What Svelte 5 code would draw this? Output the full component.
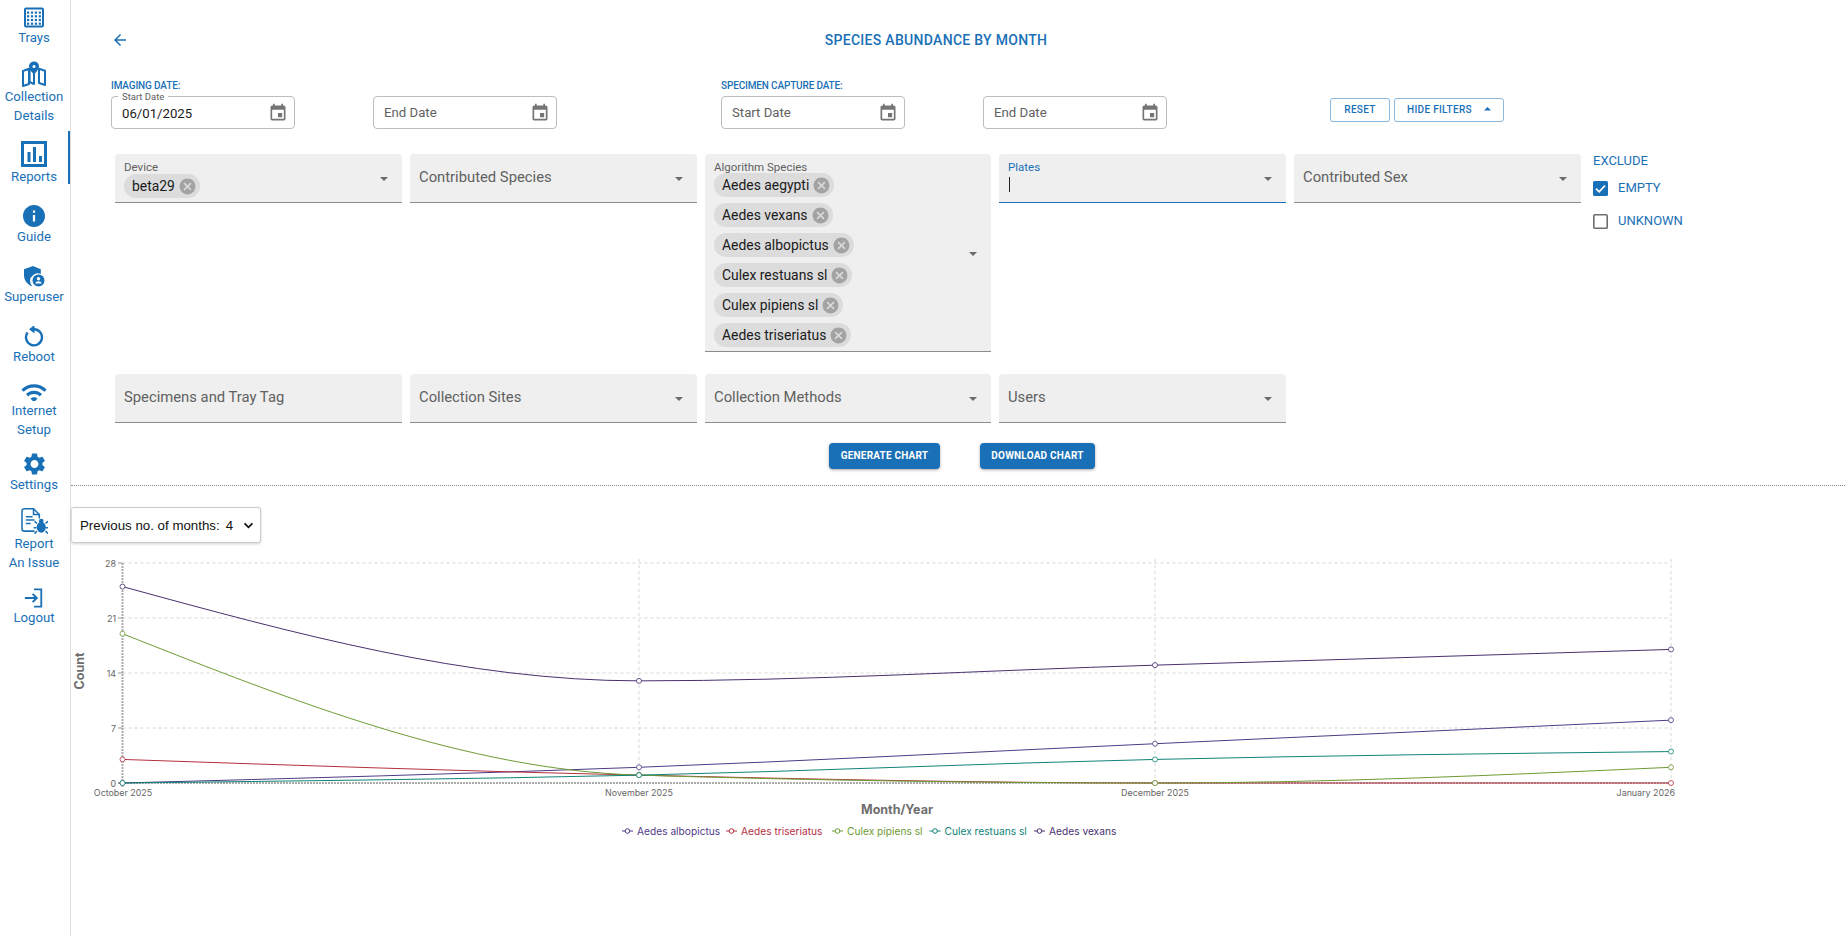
<script>
  const side = [
    { k: 'trays', label: ['Trays'], mt: 7, w: 24, h: 21, vb: '0 0 24 21' },
    { k: 'map', label: ['Collection', 'Details'], mt: 14, w: 26, h: 26, vb: '0 0 26 26' },
    { k: 'reports', label: ['Reports'], mt: 16, w: 26, h: 26, vb: '0 0 26 26', active: true },
    { k: 'guide', label: ['Guide'], mt: 19, w: 22, h: 22, vb: '2 2 20 20' },
    { k: 'super', label: ['Superuser'], mt: 20, w: 22, h: 21, vb: '0 0 22 21' },
    { k: 'reboot', label: ['Reboot'], mt: 20, w: 22, h: 21, vb: '0 1 22 21' },
    { k: 'wifi', label: ['Internet', 'Setup'], mt: 16, w: 26, h: 19, vb: '1 2.5 22 16.5' },
    { k: 'settings', label: ['Settings'], mt: 14, w: 23, h: 22, vb: '2 2 20 20' },
    { k: 'issue', label: ['Report', 'An Issue'], mt: 14, w: 27, h: 26, vb: '0 0 28 27' },
    { k: 'logout', label: ['Logout'], mt: 16, w: 20, h: 20, vb: '0 0 22 22' }
  ];
  const algo = ['Aedes aegypti', 'Aedes vexans', 'Aedes albopictus', 'Culex restuans sl', 'Culex pipiens sl', 'Aedes triseriatus'];

  const xs = [122.5, 639, 1155, 1671];
  const y0 = 784, unit = 220 / 28;
  const yOf = (v) => y0 - v * unit;
  const months = ['October 2025', 'November 2025', 'December 2025', 'January 2026'];
  const series = [
    { name: 'Aedes albopictus', c: '#4f3a86', t: '#4f3a86', v: [0, 2, 5, 8], lx: 622 },
    { name: 'Aedes triseriatus', c: '#b5303f', t: '#b5303f', v: [3, 1, 0, 0], lx: 726 },
    { name: 'Culex pipiens sl', c: '#6d9b34', t: '#6d9b34', v: [19, 1, 0, 2], lx: 832 },
    { name: 'Culex restuans sl', c: '#0f8378', t: '#0f8378', v: [0, 1, 3, 4], lx: 929.5 },
    { name: 'Aedes vexans', c: '#49306f', t: '#49306f', v: [25, 13, 15, 17], lx: 1034 }
  ];

  function monotonePath(px, py) {
    const n = px.length;
    const d = [], m = [];
    for (let i = 0; i < n - 1; i++) d.push((py[i + 1] - py[i]) / (px[i + 1] - px[i]));
    for (let i = 1; i < n - 1; i++) {
      if (d[i - 1] * d[i] <= 0) m[i] = 0;
      else {
        const h0 = px[i] - px[i - 1], h1 = px[i + 1] - px[i];
        const p = (d[i - 1] * h1 + d[i] * h0) / (h0 + h1);
        m[i] = (Math.sign(d[i - 1]) + Math.sign(d[i])) * Math.min(Math.abs(d[i - 1]), Math.abs(d[i]), 0.5 * Math.abs(p));
      }
    }
    m[0] = (3 * d[0] - m[1]) / 2;
    m[n - 1] = (3 * d[n - 2] - m[n - 2]) / 2;
    let s = `M${px[0]},${py[0]}`;
    for (let i = 0; i < n - 1; i++) {
      const h = (px[i + 1] - px[i]) / 3;
      s += `C${px[i] + h},${py[i] + m[i] * h} ${px[i + 1] - h},${py[i + 1] - m[i + 1] * h} ${px[i + 1]},${py[i + 1]}`;
    }
    return s;
  }
  const cancel = 'M12 2C6.47 2 2 6.47 2 12s4.47 10 10 10 10-4.47 10-10S17.53 2 12 2zm5 13.59L15.59 17 12 13.41 8.41 17 7 15.59 10.59 12 7 8.41 8.41 7 12 10.59 15.59 7 17 8.41 13.41 12 17 15.59z';
  const eventIcon = 'M17 12h-5v5h5v-5zM16 1v2H8V1H6v2H5c-1.11 0-1.99.9-1.99 2L3 19c0 1.1.89 2 2 2h14c1.1 0 2-.9 2-2V5c0-1.1-.9-2-2-2h-1V1h-2zm3 18H5V8h14v11z';
</script>

{#snippet caret()}
  <svg class="caret" viewBox="0 0 10 5" aria-hidden="true"><path d="M0 0l5 5 5-5z" /></svg>
{/snippet}

{#snippet cal()}
  <svg class="cal" viewBox="0 0 24 24" aria-hidden="true"><path d={eventIcon} /></svg>
{/snippet}

{#snippet chip(text)}
  <span class="chip">{text}<svg viewBox="0 0 24 24" aria-hidden="true"><path d={cancel} /></svg></span>
{/snippet}

{#snippet dateField(text, filled, legend)}
  <div class="date" class:filled>
    {#if legend}<span class="legend">{legend}</span>{/if}
    <span>{text}</span>
    {@render cal()}
  </div>
{/snippet}

<div class="page">
  <nav class="side">
    {#each side as s}
      <div class="item" class:active={s.active} style="margin-top:{s.mt}px">
        <svg width={s.w} height={s.h} viewBox={s.vb} aria-hidden="true">
          {#if s.k === 'trays'}
            <rect x="3" y="1.5" width="18" height="18" rx="1" fill="none" stroke="currentColor" stroke-width="2" />
            {#each [5.5, 9.2, 12.9, 16.6] as yy}
              {#each [6, 9.9, 13.8, 17.7] as xx}
                <rect x={xx - 1} y={yy - 1} width="2.2" height="2.2" fill="currentColor" />
              {/each}
            {/each}
          {:else if s.k === 'map'}
            <path d="M2 10l6-2.2V23l-6 2zM8.6 8l4.400 2.600V23l-4.400-2zM18 7.800l6 2V24l-6-2z" fill="none" stroke="currentColor" stroke-width="2" stroke-linejoin="round" />
            <path d="M13 0.500c-3 0-5 2.200-5 4.800 0 3 5 8.500 5 8.500s5-5.500 5-8.500c0-2.600-2-4.800-5-4.800z" fill="currentColor" />
            <circle cx="13" cy="5.400" r="1.500" fill="#fff" />
          {:else if s.k === 'reports'}
            <rect x="1.500" y="1.500" width="23" height="23" fill="none" stroke="currentColor" stroke-width="3" />
            <rect x="6.500" y="11" width="3" height="10" fill="currentColor" />
            <rect x="12" y="6" width="3" height="15" fill="currentColor" />
            <rect x="18" y="15" width="3" height="6" fill="currentColor" />
          {:else if s.k === 'guide'}
            <path fill="currentColor" d="M12 2C6.48 2 2 6.48 2 12s4.48 10 10 10 10-4.48 10-10S17.52 2 12 2zm1 15h-2v-6h2v6zm0-8h-2V7h2v2z" />
          {:else if s.k === 'super'}
            <path fill="currentColor" d="M10 0L1 3.300v6.200c0 5 3.600 9.400 8.500 10.800a7 7 0 0 1 .5-11 7 7 0 0 1 7.800-1.200V3.300z" />
            <circle cx="15.500" cy="14.500" r="6" fill="currentColor" />
            <circle cx="15.500" cy="12.800" r="1.700" fill="#fff" />
            <path d="M12.300 17.600c.4-1.600 1.800-2.300 3.200-2.300s2.800.7 3.200 2.300z" fill="#fff" />
          {:else if s.k === 'reboot'}
            <path d="M11 4.300a8 8 0 1 1-6.400 3.200" fill="none" stroke="currentColor" stroke-width="2.400" />
            <path d="M11.500 0v8.400L6 4.300z" fill="currentColor" />
          {:else if s.k === 'wifi'}
            <path fill="currentColor" d="M1 9l2 2c4.970-4.970 13.030-4.970 18 0l2-2C16.930 2.930 7.080 2.930 1 9zm8 8l3 3 3-3c-1.650-1.660-4.340-1.660-6 0zm-4-4l2 2c2.760-2.760 7.240-2.760 10 0l2-2C15.140 9.140 8.870 9.140 5 13z" />
          {:else if s.k === 'settings'}
            <path fill="currentColor" d="M19.140 12.940c.04-.3.06-.61.06-.94 0-.32-.02-.64-.07-.94l2.030-1.580c.18-.14.23-.41.12-.61l-1.920-3.320c-.12-.22-.37-.29-.59-.22l-2.390.96c-.5-.38-1.030-.7-1.620-.94l-.36-2.540c-.04-.24-.24-.41-.48-.41h-3.840c-.24 0-.43.17-.47.41l-.36 2.540c-.59.24-1.130.57-1.620.94l-2.390-.96c-.22-.08-.47 0-.59.22L2.740 8.870c-.12.21-.08.47.12.61l2.030 1.580c-.05.3-.09.63-.09.94s.02.64.07.94l-2.030 1.580c-.18.14-.23.41-.12.61l1.920 3.320c.12.22.37.29.59.22l2.390-.96c.5.38 1.030.7 1.620.94l.36 2.540c.05.24.24.41.48.41h3.840c.24 0 .44-.17.47-.41l.36-2.540c.59-.24 1.130-.56 1.620-.94l2.390.96c.22.08.47 0 .59-.22l1.920-3.320c.12-.22.07-.47-.12-.61l-2.010-1.580zM12 15.600c-1.980 0-3.600-1.620-3.600-3.600s1.620-3.600 3.600-3.600 3.600 1.620 3.600 3.600-1.620 3.600-3.600 3.600z" />
          {:else if s.k === 'issue'}
            <path d="M14 24H3.500A2.500 2.500 0 0 1 1 21.500V3A2.500 2.500 0 0 1 3.500 .8H13l6 6V11" fill="none" stroke="currentColor" stroke-width="1.600" />
            <path d="M13 .8V6.800h6" fill="none" stroke="currentColor" stroke-width="1.600" />
            <path d="M5 9h7M5 12.500h9M5 16h5" stroke="currentColor" stroke-width="1.600" />
            <circle cx="21" cy="13.500" r="2.400" fill="currentColor" />
            <ellipse cx="21" cy="20" rx="4.800" ry="5.600" fill="currentColor" />
            <path d="M16.500 16l-2.500-2.200M25.500 16l2.500-2.200M16 20.500h-3M26 20.500h2.500M16.500 24l-2.500 2.500M25.500 24l2.500 2.500" stroke="currentColor" stroke-width="1.600" />
          {:else if s.k === 'logout'}
            <path d="M11 1.500h8v19h-8" fill="none" stroke="currentColor" stroke-width="2" />
            <path d="M1 11h12M9.500 6.500L14 11l-4.500 4.500" fill="none" stroke="currentColor" stroke-width="2.200" />
          {/if}
        </svg>
        {#each s.label as line}<span>{line}</span>{/each}
      </div>
    {/each}
  </nav>

  <main class="main">
    <header class="head">
      <svg class="back" viewBox="0 0 24 24" aria-hidden="true"><path d="M20 11H7.830l5.590-5.590L12 4l-8 8 8 8 1.410-1.410L7.830 13H20v-2z" /></svg>
      <h1>SPECIES ABUNDANCE BY MONTH</h1>
    </header>

    <section class="dates">
      <div class="dategroup first">
        <div class="dlabel">IMAGING DATE:</div>
        <div class="pair">
          {@render dateField('06/01/2025', true, 'Start Date')}
          {@render dateField('End Date', false, '')}
        </div>
      </div>
      <div class="dategroup second">
        <div class="dlabel">SPECIMEN CAPTURE DATE:</div>
        <div class="pair">
          {@render dateField('Start Date', false, '')}
          {@render dateField('End Date', false, '')}
        </div>
      </div>
      <div class="actions">
        <button class="outline reset">RESET</button>
        <button class="outline hide">HIDE FILTERS <svg viewBox="0 0 10 5" aria-hidden="true"><path d="M0 5l5-5 5 5z" /></svg></button>
      </div>
    </section>

    <section class="filters">
      <div class="field device">
        <label>Device</label>
        <div class="chips">{@render chip('beta29')}</div>
        {@render caret()}
      </div>
      <div class="field plain"><span>Contributed Species</span>{@render caret()}</div>
      <div class="field algo">
        <label>Algorithm Species</label>
        <div class="chips col">
          {#each algo as a}{@render chip(a)}{/each}
        </div>
        {@render caret()}
      </div>
      <div class="field focus">
        <label>Plates</label>
        <i class="cursor"></i>
        {@render caret()}
      </div>
      <div class="field plain"><span>Contributed Sex</span>{@render caret()}</div>
      <div class="exclude">
        <div class="extitle">EXCLUDE</div>
        <div class="check one">
          <svg viewBox="0 0 14 14" aria-hidden="true"><rect width="14" height="14" rx="1.500" fill="#1a70b7" /><path d="M2.800 7.200l2.900 2.900 5.500-5.700" fill="none" stroke="#fff" stroke-width="1.600" /></svg>
          <span>EMPTY</span>
        </div>
        <div class="check two">
          <svg viewBox="0 0 14 14" aria-hidden="true"><rect x="0.750" y="0.750" width="12.500" height="12.500" rx="1" fill="none" stroke="#6f6f6f" stroke-width="1.500" /></svg>
          <span>UNKNOWN</span>
        </div>
      </div>
      <div class="field plain"><span>Specimens and Tray Tag</span></div>
      <div class="field plain"><span>Collection Sites</span>{@render caret()}</div>
      <div class="field plain"><span>Collection Methods</span>{@render caret()}</div>
      <div class="field plain"><span>Users</span>{@render caret()}</div>
    </section>

    <div class="gen">
      <button class="solid g1">GENERATE CHART</button>
      <button class="solid g2">DOWNLOAD CHART</button>
    </div>

    <div class="divider"></div>

    <div class="months">
      <span>Previous no. of months:</span><span class="num">4</span>
      <svg viewBox="0 0 12 8" aria-hidden="true"><path d="M1.500 1.500L6 6l4.500-4.500" fill="none" stroke="#111" stroke-width="2" /></svg>
    </div>

    <svg class="chart" viewBox="71 552 1774 300" width="1774" height="300" role="img">
      {#each [7, 14, 21, 28] as t}
        <line x1="122.500" x2="1671" y1={yOf(t)} y2={yOf(t)} class="grid" />
      {/each}
      {#each xs.slice(1) as x}
        <line x1={x} x2={x} y1="560" y2="784" class="grid" />
      {/each}
      <line x1="122.500" x2="122.500" y1="564" y2="788" class="axis" />
      <line x1="118" x2="1671" y1="784" y2="784" class="axis" />
      {#each [0, 7, 14, 21, 28] as t}
        <line x1="118" x2="122.500" y1={yOf(t)} y2={yOf(t)} class="tick" />
        <text x="116" y={yOf(t) + 3.500} text-anchor="end" class="tl">{t}</text>
      {/each}
      {#each months as m, i}
        <text x={i === 3 ? 1675 : i === 0 ? 123 : xs[i]} y="797" text-anchor={i === 3 ? 'end' : 'middle'} class="tl">{m}</text>
      {/each}
      <text class="at" transform="translate(84 672) rotate(-90)" text-anchor="middle">Count</text>
      <text class="at" x="897" y="815" text-anchor="middle">Month/Year</text>

      {#each series as s}
        <path d={monotonePath(xs, s.v.map(yOf))} fill="none" stroke={s.c} stroke-width="1" />
      {/each}
      {#each series as s}
        {#each s.v as v, i}
          <circle cx={xs[i]} cy={yOf(v)} r="2.500" fill="#fff" stroke={s.c} stroke-width="1" stroke-opacity=".8" />
        {/each}
      {/each}

      {#each series as s}
        <line x1={s.lx} x2={s.lx + 11} y1="832" y2="832" stroke={s.c} stroke-width="1" />
        <circle cx={s.lx + 5.500} cy="832" r="2.300" fill="#fff" stroke={s.c} />
        <text x={s.lx + 15} y="836" fill={s.t} class="lg">{s.name}</text>
      {/each}
    </svg>
  </main>
</div>

<style>
  :global(body) { margin: 0; background: #fff; overflow: hidden; }
  .page {
    display: flex;
    width: 1845px;
    height: 936px;
    font-family: Roboto, "Liberation Sans", sans-serif;
    color: #1a70b7;
  }
  .side {
    width: 70px;
    flex: none;
    box-sizing: content-box;
    border-right: 1px solid #e0e0e0;
    display: flex;
    flex-direction: column;
    align-items: center;
  }
  .item {
    position: relative;
    align-self: stretch;
    display: flex;
    flex-direction: column;
    align-items: center;
    padding-right: 2px;
    font-size: 13.2px;
    line-height: 19px;
    letter-spacing: 0;
  }
  .item svg { display: block; flex: none; }
  .item.active::after {
    content: "";
    position: absolute;
    right: 0;
    top: -10px;
    bottom: 2px;
    width: 2px;
    background: #1a70b7;
  }
  .main { flex: 1; display: flex; flex-direction: column; min-width: 0; }
  .head {
    height: 80px;
    display: flex;
    align-items: center;
    justify-content: center;
    position: relative;
  }
  .head h1 {
    margin: 0;
    font-size: 14px;
    font-weight: 500;
    letter-spacing: .3px;
    position: relative;
    left: -22px;
  }
  .back { position: absolute; left: 40px; top: 31px; width: 18px; height: 18px; fill: #1a70b7; }

  .dates { display: flex; padding-left: 40px; height: 74px; }
  .dategroup.first { width: 610px; }
  .dategroup.second { width: 609px; }
  .dlabel { font-size: 10px; font-weight: 500; line-height: 12px; height: 16px; letter-spacing: -.15px; }
  .pair { display: flex; gap: 78px; }
  .date {
    position: relative;
    box-sizing: border-box;
    width: 184px;
    height: 33px;
    border: 1px solid #bdbdbd;
    border-radius: 4px;
    display: flex;
    align-items: center;
    justify-content: space-between;
    padding: 0 6px 0 10px;
    font-size: 13.2px;
    color: #616161;
  }
  .date.filled { color: #1c1c1c; }
  .date.filled span:not(.legend) { position: relative; top: 1px; }
  .legend {
    position: absolute;
    left: 6px;
    top: -5px;
    padding: 0 4px;
    background: #fff;
    font-size: 9.500px;
    line-height: 10px;
    color: #616161;
  }
  .cal { width: 20px; height: 20px; fill: #757575; }
  .actions { display: flex; gap: 4px; margin-top: 18px; height: 24px; }
  button { font-family: inherit; cursor: pointer; }
  .outline {
    box-sizing: border-box;
    height: 24px;
    background: #fff;
    border: 1px solid #8ab8dc;
    border-radius: 3px;
    color: #1a70b7;
    font-size: 10px;
    font-weight: 500;
    letter-spacing: .3px;
    padding: 0 0 2px;
    display: flex;
    align-items: center;
    justify-content: center;
  }
  .reset { width: 60px; }
  .hide { width: 110px; gap: 12px; }
  .hide svg { width: 7px; height: 3.500px; fill: #1a70b7; }

  .filters {
    display: grid;
    grid-template-columns: 287px 287px 286px 287px 287px 1fr;
    column-gap: 8px;
    row-gap: 22px;
    align-items: start;
    padding-left: 44px;
  }
  .field {
    position: relative;
    box-sizing: border-box;
    min-height: 49px;
    background: #efefef;
    border-bottom: 1px solid #8c8c8c;
    border-radius: 4px 4px 0 0;
    padding: 7px 9px 0;
    color: #616161;
  }
  .field label { display: block; font-size: 11.5px; line-height: 13px; color: #616161; }
  .plain { padding-top: 0; display: flex; align-items: center; font-size: 14.8px; height: 49px; padding-bottom: 3px; }
  .caret { position: absolute; right: 14px; top: 50%; margin-top: -1px; width: 8px; height: 4px; fill: #6b6b6b; }
  .chips { display: flex; }
  .chips.col { flex-direction: column; align-items: flex-start; gap: 6px; margin-top: -1px; padding-bottom: 4px; }
  .chip {
    display: inline-flex;
    align-items: center;
    height: 24px;
    border-radius: 12px;
    background: #dcdcdc;
    color: #1a1a1a;
    font-size: 13.900px;
    padding: 0 3px 0 8px;
    gap: 3px;
  }
  .chip svg { width: 19px; height: 19px; fill: #a3a3a3; }
  .focus { border-bottom: 1.500px solid #1a70b7; height: 49px; }
  .focus label { color: #1a70b7; }
  .cursor { display: block; width: 1px; height: 15px; background: #222; margin: 3px 0 0 1px; }
  .exclude { padding-left: 4px; margin-top: -1px; color: #1a70b7; font-size: 13px; }
  .extitle { line-height: 16px; }
  .check { display: flex; align-items: center; gap: 10px; line-height: 16px; }
  .check svg { width: 15px; height: 15px; flex: none; }
  .check.one { margin-top: 11px; }
  .check.two { margin-top: 17px; }

  .gen { display: flex; margin-top: 20px; padding-left: 758px; height: 26px; }
  .solid {
    box-sizing: border-box;
    height: 26px;
    border: 0;
    border-radius: 4px;
    background: #1a70b7;
    color: #fff;
    font-size: 10px;
    font-weight: 700;
    letter-spacing: .2px;
    padding: 0 0 1px;
    box-shadow: 0 1px 3px rgba(0,0,0,.35);
  }
  .g1 { width: 111px; }
  .g2 { width: 115px; margin-left: 40px; }
  .divider { margin-top: 16px; border-top: 1px dotted #7f8c96; }

  .months {
    box-sizing: border-box;
    width: 190px;
    height: 36px;
    margin-top: 21px;
    background: #fff;
    border: 1px solid #ccc;
    border-left-color: #ddd;
    border-radius: 3px;
    box-shadow: 0 1px 3px rgba(0,0,0,.18);
    display: flex;
    align-items: center;
    padding-left: 8px;
    font-family: "Liberation Sans", sans-serif;
    font-size: 13.3px;
    color: #111;
    white-space: nowrap;
  }
  .months .num { margin-left: 6px; }
  .months svg { width: 11px; height: 7px; margin-left: 10px; }

  .chart { display: block; margin-top: 8px; flex: none; font-family: Inter, sans-serif; }
  .grid { stroke: #d6d6d6; stroke-width: 1; stroke-dasharray: 3 3; }
  .axis { stroke: #ababab; stroke-width: 2; stroke-dasharray: 2 1; }
  .tick { stroke: #999; stroke-width: 1; }
  .tl { font-size: 8.900px; fill: #666; }
  .at { font-size: 12.500px; font-weight: 700; fill: #6f6f6f; }
  .lg { font-size: 10.200px; }
</style>
